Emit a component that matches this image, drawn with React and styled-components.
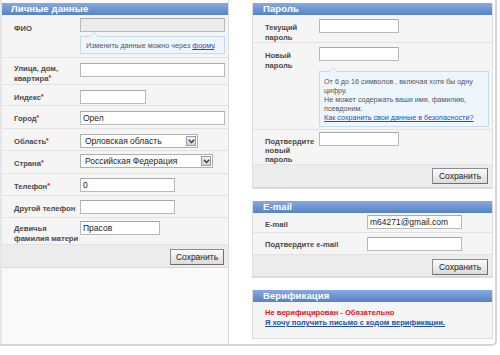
import React from "react";
import styled, { createGlobalStyle } from "styled-components";

const Global = createGlobalStyle`
  html, body { margin: 0; padding: 0; background: #fff; }
  body { font-family: "Liberation Sans", Arial, sans-serif; width: 500px; height: 355px; overflow: hidden; }
  * { box-sizing: border-box; }
`;

const Page = styled.div`
  width: 497px;
  height: 346px;
  display: flex;
  gap: 23px;
  border-right: 2px solid #d6d6d6;
  border-bottom: 2px solid #d6d6d6;
  border-bottom-right-radius: 5px;
  padding: 0 2px 0 0;
`;

const LeftColumn = styled.div`
  width: 229px;
  flex: none;
  background: #f9f9f9;
  border-left: 2px solid #e6e6e6;
  border-right: 1px solid #dcdcdc;
  padding-top: 3px;
  display: flex;
  flex-direction: column;
`;

const RightColumn = styled.div`
  width: 241px;
  flex: none;
  padding-top: 3px;
  display: flex;
  flex-direction: column;
  gap: 12px;
`;

const Panel = styled.section`
  background: #f5f5f5;
  border: 1px solid #dedede;
  border-top: none;
  display: flex;
  flex-direction: column;
`;

const Header = styled.div`
  height: 12px;
  background: linear-gradient(#88aadf, #5582c8);
  color: #fff;
  font-weight: bold;
  font-size: 9.5px;
  line-height: 12px;
  padding-left: ${(p) => p.$pad || 9}px;
  letter-spacing: 0.1px;
`;

const Row = styled.div`
  display: flex;
  min-height: ${(p) => p.$h}px;
  padding-top: ${(p) => p.$pt ?? 5}px;
  border-bottom: 1px solid #e2e2e2;
  box-shadow: 0 1px 0 #fff;
  background: #f5f5f5;
`;

const Label = styled.div`
  width: ${(p) => p.$w}px;
  flex: none;
  padding-left: ${(p) => p.$pl || 12}px;
  padding-top: ${(p) => p.$lt ?? 2}px;
  font-size: 7.6px;
  font-weight: bold;
  color: #4a4a4a;
  line-height: ${(p) => p.$lh || 11}px;
`;

const Req = styled.span`
  color: #e01010;
  font-size: 7px;
  line-height: 0;
  position: relative;
  top: -1px;
`;

const Field = styled.div`
  display: flex;
  flex-direction: column;
  align-items: flex-start;
`;

const Input = styled.input`
  width: ${(p) => p.$w}px;
  height: 14px;
  border: 1px solid #b9b9b9;
  border-top-color: #a8a8a8;
  background: ${(p) => (p.disabled ? "#ececec" : "#fff")};
  font-family: "Liberation Sans", Arial, sans-serif;
  font-size: 8.5px;
  color: #222;
  padding: 0 2px;
  margin: 0;
  outline: none;
`;

const SelectBox = styled.div`
  position: relative;
  width: ${(p) => p.$w}px;
  height: 14px;
  border: 1px solid #b0b0b0;
  background: #fff;
  font-size: 8.5px;
  line-height: 12px;
  color: #222;
  padding-left: 4px;
`;

const SelectArrow = styled.div`
  position: absolute;
  right: 1px;
  top: 1px;
  width: 10px;
  height: 10px;
  border: 1px solid #9a9aaa;
  background: linear-gradient(#f2f2f6, #cfd0da);
  display: flex;
  align-items: center;
  justify-content: center;
`;

const Tip = styled.div`
  position: relative;
  margin-top: ${(p) => p.$mt || 4}px;
  width: ${(p) => p.$w}px;
  background: #eef6fd;
  border: 1px solid #c3dbf2;
  padding: ${(p) => p.$pad || "5px 4px"};
  font-size: 7.2px;
  line-height: 9px;
  color: #555;
  &::before {
    content: "";
    position: absolute;
    top: -5px;
    left: 8px;
    border: 5px solid transparent;
    border-top: none;
    border-bottom-color: #c3dbf2;
  }
  &::after {
    content: "";
    position: absolute;
    top: -4px;
    left: 9px;
    border: 4px solid transparent;
    border-top: none;
    border-bottom-color: #eef6fd;
  }
`;

const TipLink = styled.a`
  color: #1f4fb0;
  text-decoration: underline;
`;

const SaveBar = styled.div`
  height: ${(p) => p.$h || 23}px;
  background: #ececec;
  border-bottom: 1px solid #d8d8d8;
  display: flex;
  justify-content: flex-end;
  align-items: flex-start;
  padding: ${(p) => p.$pt || 4}px 4px 0 0;
`;

const Button = styled.button`
  width: ${(p) => p.$w || 54}px;
  height: 16px;
  border: 1px solid #8c8c8c;
  border-right-color: #6f6f6f;
  border-bottom-color: #6f6f6f;
  background: linear-gradient(#fbfbfb, #dcdcdc);
  font-family: "Liberation Sans", Arial, sans-serif;
  font-size: 8.5px;
  color: #222;
  padding: 0;
  margin: 0;
`;

const Filler = styled.div`
  flex: 1;
  background: #f9f9f9;
`;

const VerifyBody = styled.div`
  height: 36px;
  padding: 6px 0 0 12px;
  font-size: 7.6px;
  font-weight: bold;
  line-height: 10px;
`;

const Warn = styled.div`
  color: #e8141a;
`;

const VerifyLink = styled.a`
  color: #1f4fb0;
  text-decoration: underline;
`;

const Chevron = () => (
  <svg width="7" height="5" viewBox="0 0 7 5">
    <path d="M0.8 0.8 L3.5 3.6 L6.2 0.8" fill="none" stroke="#3a3a55" strokeWidth="1.4" />
  </svg>
);

const Select = ({ w, value }) => (
  <SelectBox $w={w}>
    {value}
    <SelectArrow>
      <Chevron />
    </SelectArrow>
  </SelectBox>
);

export default function App() {
  return (
    <>
      <Global />
      <Page>
        <LeftColumn>
          <Header>Личные данные</Header>
          <Row $h={43} $pt={3}>
            <Label $w={78} $lt={5}>ФИО</Label>
            <Field>
              <Input $w={145} disabled />
              <Tip $w={145} $mt={4} $pad="4px 4px 3px 5px">
                Изменить данные можно через <TipLink>форму</TipLink>.
              </Tip>
            </Field>
          </Row>
          <Row $h={26}>
            <Label $w={78} $lt={1} $lh={10}>
              Улица, дом,
              <br />
              квартира<Req>*</Req>
            </Label>
            <Field>
              <Input $w={145} />
            </Field>
          </Row>
          <Row $h={21}>
            <Label $w={78}>
              Индекс<Req>*</Req>
            </Label>
            <Field>
              <Input $w={66} />
            </Field>
          </Row>
          <Row $h={23}>
            <Label $w={78}>
              Город<Req>*</Req>
            </Label>
            <Field>
              <Input $w={145} defaultValue="Орел" />
            </Field>
          </Row>
          <Row $h={22}>
            <Label $w={78}>
              Область<Req>*</Req>
            </Label>
            <Field>
              <Select w={118} value="Орловская область" />
            </Field>
          </Row>
          <Row $h={23} $pt={3}>
            <Label $w={78} $lt={4}>
              Страна<Req>*</Req>
            </Label>
            <Field>
              <Select w={133} value="Российская Федерация" />
            </Field>
          </Row>
          <Row $h={22} $pt={4}>
            <Label $w={78} $lt={3}>
              Телефон<Req>*</Req>
            </Label>
            <Field>
              <Input $w={95} defaultValue="0" />
            </Field>
          </Row>
          <Row $h={22} $pt={4}>
            <Label $w={78} $lt={3}>Другой телефон</Label>
            <Field>
              <Input $w={95} />
            </Field>
          </Row>
          <Row $h={27} $pt={3}>
            <Label $w={78} $lt={3} $lh={10}>
              Девичья
              <br />
              фамилия матери
            </Label>
            <Field>
              <Input $w={80} defaultValue="Прасов" />
            </Field>
          </Row>
          <SaveBar>
            <Button>Сохранить</Button>
          </SaveBar>
          <Filler />
        </LeftColumn>

        <RightColumn>
          <Panel>
            <Header $pad={10}>Пароль</Header>
            <Row $h={27} $pt={4}>
              <Label $w={66} $lt={4} $lh={9.5}>
                Текущий
                <br />
                пароль
              </Label>
              <Field>
                <Input $w={80} />
              </Field>
            </Row>
            <Row $h={87} $pt={4}>
              <Label $w={66} $lt={4} $lh={9.5}>
                Новый
                <br />
                пароль
              </Label>
              <Field>
                <Input $w={80} />
                <Tip $w={170} $mt={10} $pad="5px 4px 4px 4px">
                  От 6 до 16 символов , включая хотя бы одну цифру.
                  <br />
                  Не может содержать ваши имя, фамилию, псевдоним.
                  <br />
                  <TipLink>Как сохранить свои данные в безопасности?</TipLink>
                </Tip>
              </Field>
            </Row>
            <Row $h={35} $pt={2}>
              <Label $w={66} $lt={5} $lh={9}>
                Подтвердите
                <br />
                новый
                <br />
                пароль
              </Label>
              <Field>
                <Input $w={80} />
              </Field>
            </Row>
            <SaveBar $pt={3}>
              <Button $w={56}>Сохранить</Button>
            </SaveBar>
          </Panel>

          <Panel>
            <Header $pad={10}>E-mail</Header>
            <Row $h={20} $pt={2}>
              <Label $w={114} $lt={4}>E-mail</Label>
              <Field>
                <Input $w={95} defaultValue="m64271@gmail.com" />
              </Field>
            </Row>
            <Row $h={22} $pt={4}>
              <Label $w={114} $lt={2}>Подтвердите e-mail</Label>
              <Field>
                <Input $w={95} />
              </Field>
            </Row>
            <SaveBar $h={22}>
              <Button $w={56}>Сохранить</Button>
            </SaveBar>
          </Panel>

          <Panel>
            <Header $pad={10}>Верификация</Header>
            <VerifyBody>
              <Warn>Не верифицирован - Обязательно</Warn>
              <VerifyLink>Я хочу получить письмо с кодом верификации.</VerifyLink>
            </VerifyBody>
          </Panel>
        </RightColumn>
      </Page>
    </>
  );
}
